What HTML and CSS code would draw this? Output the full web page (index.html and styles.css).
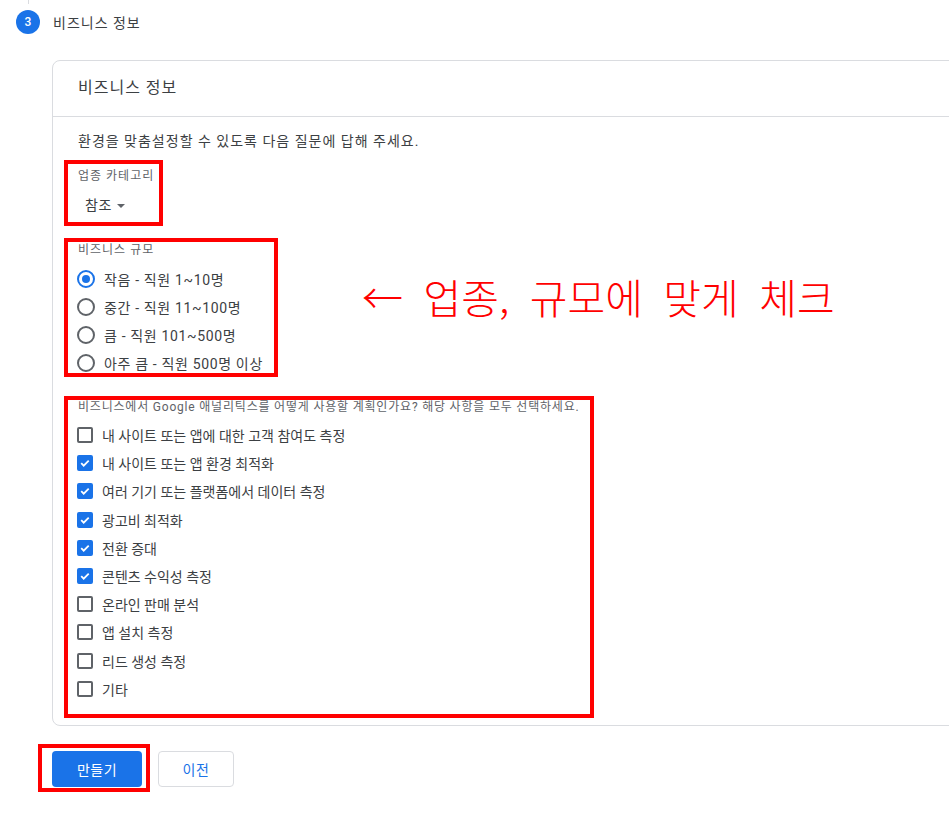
FILE: index.html
```html
<!DOCTYPE html>
<html lang="ko">
<head>
  <meta charset="UTF-8">
  <title>비즈니스 정보</title>
  <link rel="stylesheet" href="styles.css">
</head>
<body>
  <div class="step-line"></div>
  <div class="step-head">
    <span class="step-num">3</span>
    <span class="step-title">비즈니스 정보</span>
  </div>

  <div class="card">
    <div class="card-head">비즈니스 정보</div>
    <div class="card-body">
      <p class="intro">환경을 맞춤설정할 수 있도록 다음 질문에 답해 주세요.</p>

      <!-- 업종 -->
      <div class="mark mark-category">
        <div class="field-label">업종 카테고리</div>
        <div class="select">참조 <span class="caret"></span></div>
      </div>

      <!-- 규모 + 안내 문구 -->
      <div class="size-row">
        <div class="mark mark-size">
          <div class="field-label">비즈니스 규모</div>
          <div class="radio-list">
            <label class="radio-item"><span class="radio checked"></span>작음 - 직원 1~10명</label>
            <label class="radio-item"><span class="radio"></span>중간 - 직원 11~100명</label>
            <label class="radio-item"><span class="radio"></span>큼 - 직원 101~500명</label>
            <label class="radio-item"><span class="radio"></span>아주 큼 - 직원 500명 이상</label>
          </div>
        </div>
        <div class="note">← 업종, 규모에 맞게 체크</div>
      </div>

      <!-- 사용 목적 -->
      <div class="mark mark-usage">
        <div class="field-label small">비즈니스에서 Google 애널리틱스를 어떻게 사용할 계획인가요? 해당 사항을 모두 선택하세요.</div>
        <div class="check-list">
          <label class="check-item"><span class="check"></span>내 사이트 또는 앱에 대한 고객 참여도 측정</label>
          <label class="check-item"><span class="check checked"></span>내 사이트 또는 앱 환경 최적화</label>
          <label class="check-item"><span class="check checked"></span>여러 기기 또는 플랫폼에서 데이터 측정</label>
          <label class="check-item"><span class="check checked"></span>광고비 최적화</label>
          <label class="check-item"><span class="check checked"></span>전환 증대</label>
          <label class="check-item"><span class="check checked"></span>콘텐츠 수익성 측정</label>
          <label class="check-item"><span class="check"></span>온라인 판매 분석</label>
          <label class="check-item"><span class="check"></span>앱 설치 측정</label>
          <label class="check-item"><span class="check"></span>리드 생성 측정</label>
          <label class="check-item"><span class="check"></span>기타</label>
        </div>
      </div>
    </div>
  </div>

  <div class="actions">
    <div class="mark mark-button">
      <button class="btn btn-primary">만들기</button>
    </div>
    <button class="btn btn-outline">이전</button>
  </div>
</body>
</html>
```

FILE: styles.css
```css
/* Grundlayout */
html, body {
  margin: 0;
  padding: 0;
  background: #fff;
  overflow: hidden;
  font-family: Roboto, "Noto Sans CJK KR", sans-serif;
  color: #202124;
}

/* Stepper-Kopf */
.step-line {
  width: 1px;
  height: 4px;
  margin-left: 28px;
  background: #dadce0;
}

.step-head {
  display: flex;
  align-items: center;
  gap: 13px;
  margin-top: 6px;
  padding-left: 16px;
  height: 24px;
}

.step-num {
  width: 24px;
  height: 24px;
  border-radius: 50%;
  background: #1a73e8;
  color: #fff;
  font-size: 12px;
  font-weight: 500;
  display: flex;
  align-items: center;
  justify-content: center;
}

.step-title {
  font-size: 14px;
  letter-spacing: 1px;
  color: #3c4043;
}

/* Karte */
.card {
  margin: 26px 0 0 52px;
  width: 1000px;
  border: 1px solid #dadce0;
  border-radius: 8px;
}

.card-head {
  height: 56px;
  box-sizing: border-box;
  padding: 16px 0 0 25px;
  font-size: 16px;
  line-height: 22px;
  letter-spacing: 1px;
  color: #3c4043;
  border-bottom: 1px solid #dadce0;
}

.card-body {
  padding: 14px 0 7px 11px;
}

.intro {
  margin: 0 0 9px 14px;
  font-size: 14px;
  line-height: 20px;
  letter-spacing: 1px;
  color: #3c4043;
}

/* rote Markierungen */
.mark {
  border: 4px solid #ff0000;
  box-sizing: border-box;
  padding-left: 10px;
}

.mark-category {
  width: 99px;
  height: 66px;
  padding-top: 4px;
}

.field-label {
  font-size: 12px;
  line-height: 16px;
  letter-spacing: 1px;
  color: #5f6368;
}

.field-label.small {
  line-height: 14px;
  white-space: nowrap;
  letter-spacing: 0.8px;
}

.select {
  margin: 11px 0 0 7px;
  font-size: 14px;
  line-height: 20px;
  letter-spacing: 0.5px;
  color: #3c4043;
  display: flex;
  align-items: center;
  gap: 5px;
}

.caret {
  width: 0;
  height: 0;
  border-left: 4px solid transparent;
  border-right: 4px solid transparent;
  border-top: 4px solid #5f6368;
  margin-top: 2px;
}

.size-row {
  display: flex;
  align-items: flex-start;
  margin-top: 12px;
}

.mark-size {
  width: 214px;
  height: 139px;
  flex-shrink: 0;
}

.radio-list {
  display: flex;
  flex-direction: column;
  gap: 8px;
  margin-top: 11px;
}

.radio-item,
.check-item {
  display: flex;
  align-items: center;
  height: 20px;
  font-size: 14px;
  color: #3c4043;
  white-space: nowrap;
}

.radio-item {
  letter-spacing: 0.65px;
}

.radio {
  width: 18px;
  height: 18px;
  box-sizing: border-box;
  border: 2px solid #5f6368;
  border-radius: 50%;
  margin: 0 9px 0 -1px;
  display: flex;
  align-items: center;
  justify-content: center;
}

.radio.checked {
  border-color: #1a73e8;
}

.radio.checked::after {
  content: "";
  width: 8px;
  height: 8px;
  border-radius: 50%;
  background: #1a73e8;
}

.note {
  margin: 34px 0 0 84px;
  font-family: "Noto Sans CJK KR", sans-serif;
  font-weight: 300;
  font-size: 41px;
  line-height: 48px;
  color: #ff0000;
  word-spacing: 9px;
  white-space: nowrap;
}

.mark-usage {
  width: 530px;
  height: 322px;
  margin-top: 19px;
}

.check-list {
  display: flex;
  flex-direction: column;
  gap: 8.2px;
  margin-top: 11px;
}

.check {
  width: 16px;
  height: 16px;
  box-sizing: border-box;
  border: 2px solid #5f6368;
  border-radius: 2px;
  margin: 0 9px 0 -1px;
  flex-shrink: 0;
}

.check.checked {
  border-color: #1a73e8;
  background: #1a73e8 url("data:image/svg+xml;utf8,<svg xmlns='http://www.w3.org/2000/svg' viewBox='0 0 12 12'><path d='M2.2 6.2l2.5 2.5 5-5' fill='none' stroke='white' stroke-width='1.8'/></svg>") center / 12px 12px no-repeat;
}

/* Schaltflächen */
.actions {
  display: flex;
  align-items: flex-start;
  margin: 18px 0 0 38px;
}

.mark-button {
  padding: 3px 4px 1px 10px;
}

.btn {
  height: 36px;
  border-radius: 4px;
  font-family: Roboto, "Noto Sans CJK KR", sans-serif;
  font-size: 14px;
  letter-spacing: 0.5px;
  cursor: pointer;
  display: block;
}

.btn-primary {
  width: 90px;
  background: #1a73e8;
  color: #fff;
  border: none;
}

.btn-outline {
  width: 76px;
  margin: 7px 0 0 8px;
  background: #fff;
  color: #1a73e8;
  border: 1px solid #dadce0;
}
```
